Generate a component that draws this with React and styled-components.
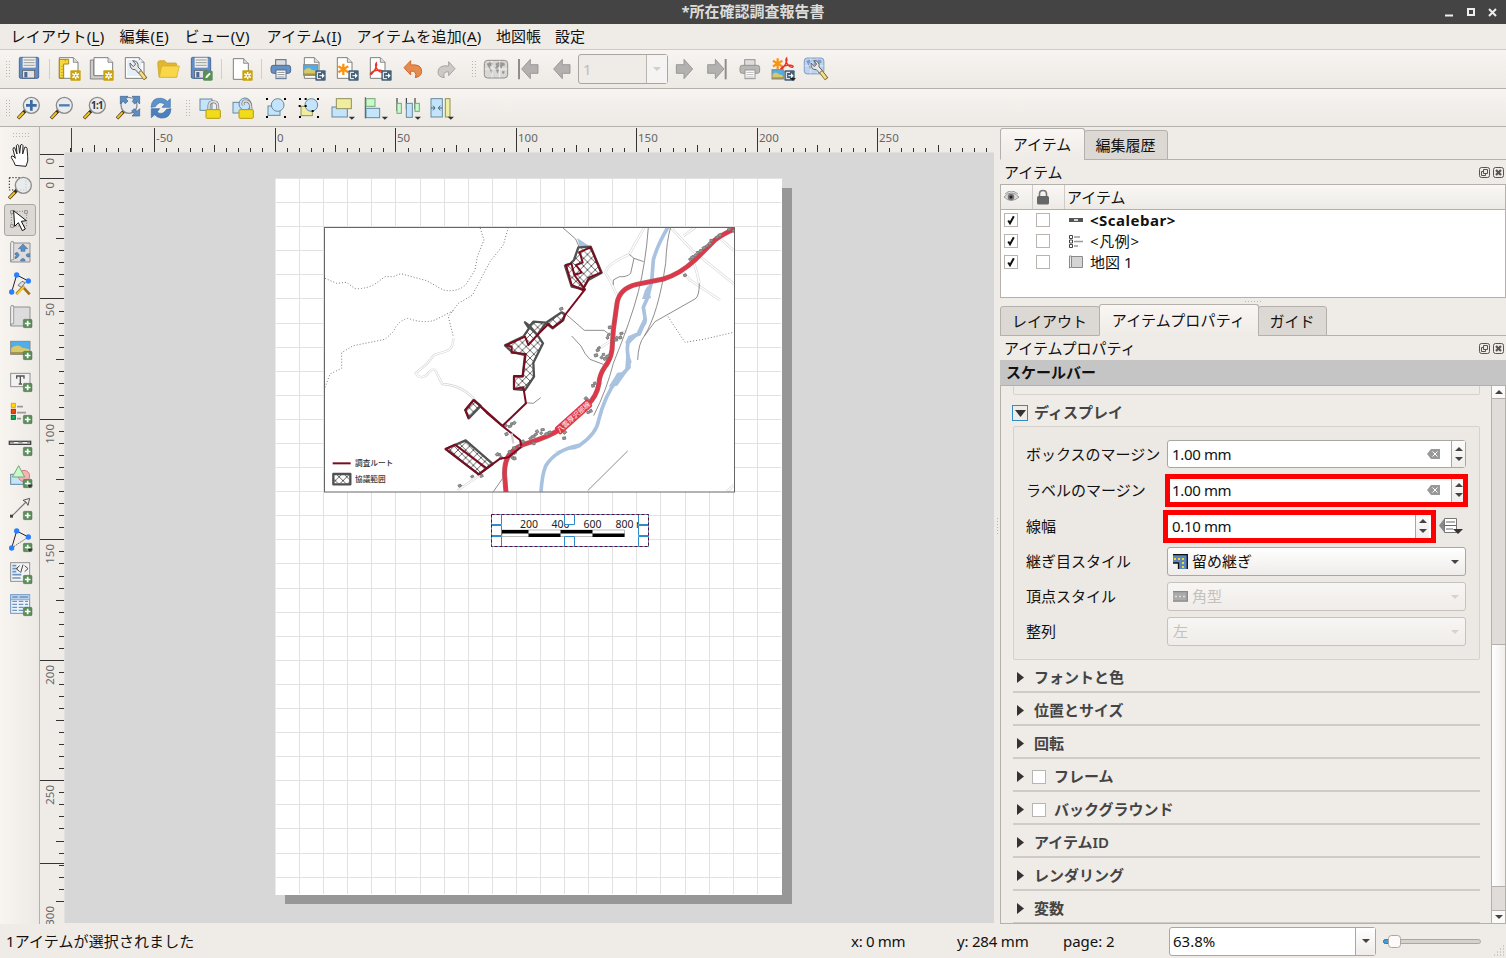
import React from 'react';
import styled, { createGlobalStyle, css } from 'styled-components';

const Global = createGlobalStyle`
  * { box-sizing: border-box; }
  body { margin: 0; overflow: hidden; background: #efebe7; }
`;

const line = '#b4b1ad';

const Window = styled.div`
  width: 1506px; height: 958px; display: flex; flex-direction: column; overflow: hidden;
  background: #efebe7; color: #111;
  font: 15px/20px "Noto Sans", "Noto Sans CJK JP", sans-serif;
  white-space: nowrap;
`;
const TitleBar = styled.header`
  height: 24px; background: #444; color: #dcdcdc; font-weight: 700; line-height: 23px;
  display: grid; grid-template-columns: 70px 1fr 70px; text-align: center;
`;
const WindowButtons = styled.div`
  display: flex; align-items: center; justify-content: flex-end; padding-right: 5px;
`;
const MenuBar = styled.nav`
  height: 26px; display: flex; padding-left: 10.5px; line-height: 25px; border-bottom: 1px solid #cfcbc7;
`;
const MenuItem = styled.div`
  width: ${p => p.$w}px; letter-spacing: ${p => p.$ls || 0}px;
  u { text-underline-offset: 3px; }
`;
const ToolBar = styled.div`
  height: ${p => p.$h}px; display: flex; align-items: center;
  background: linear-gradient(#f7f4f1, #edeae5); border-bottom: 1px solid ${line};
`;
const dots = css`
  background-image: radial-gradient(circle, #b9b5b0 0.7px, transparent 0.9px);
  background-size: 3px 3px;
`;
const Grip = styled.div`
  width: 5px; height: 18px; margin-left: ${p => p.$l}px; margin-right: ${p => p.$r}px; ${dots}
`;
const HGrip = styled.div`
  width: 18px; height: 6px; margin: 5px 0 2px 12px; ${dots}
`;
const Sep = styled.div`
  width: 1px; height: 20px; margin: 0 3px 0 3px; background: #d2cec9;
`;
const Tool = styled.div`
  width: 33px; height: 33px; display: flex; align-items: center; justify-content: center; flex: none;
  svg { width: 24px; height: 24px; overflow: visible; display: block; }
`;
const SideTool = styled.div`
  width: 32px; height: 32px; margin-left: 4px; display: flex; align-items: center; justify-content: center;
  border: 1px solid ${p => (p.$on ? '#aaa6a2' : 'transparent')}; border-radius: 3px;
  background: ${p => (p.$on ? '#dcd8d4' : 'transparent')};
  svg { width: 24px; height: 24px; overflow: visible; display: block; }
`;
const PageCombo = styled.div`
  width: 90px; height: 30px; margin: 0 -1px 0 0; display: flex; border: 1px solid #a9a6a2; border-radius: 3px;
  color: #c0bdb9; line-height: 28px; background: #efebe7;
  span { flex: 1; padding-left: 4px; border-right: 1px solid #b9b6b2; }
  i { width: 20px; background: #f6f4f2; display: flex; align-items: center; justify-content: center; }
`;
const Body = styled.div` height: 797px; display: flex; `;
const SideBar = styled.div`
  width: 40px; border-right: 1px solid ${line}; background: linear-gradient(90deg, #f8f5f1, #edeae5);
`;
const CanvasView = styled.div` width: 954px; height: 797px; svg { display: block; } `;
const Splitter = styled.div`
  width: 6px; display: flex; align-items: center; justify-content: center;
  &::after { content: ''; width: 3px; height: 18px; ${dots} }
`;
const Panel = styled.aside` width: 506px; display: flex; flex-direction: column; `;
const Tabs = styled.div`
  height: ${p => p.$h}px; display: flex; align-items: flex-end; padding-top: 1px; border-bottom: 1px solid ${line};
`;
const Tab = styled.div`
  width: ${p => p.$w}px; height: ${p => (p.$on ? 32 : 30)}px; line-height: ${p => (p.$on ? 30 : 28)}px;
  text-align: center; border: 1px solid ${line}; border-radius: 3px 3px 0 0; margin-left: ${p => p.$ml || 0}px;
  border-bottom-color: ${p => (p.$on ? '#efebe7' : line)};
  margin-bottom: -1px; padding-right: 1px; letter-spacing: ${p => p.$ls || 0}px;
  background: ${p => (p.$on ? 'linear-gradient(#f9f6f3, #efebe7)' : '#dcd8d4')};
`;
const DockTitle = styled.div`
  height: ${p => p.$h}px; display: flex; align-items: center; justify-content: space-between; padding: 0 1px 0 4px;
  svg { display: block; margin-top: 2px; }
`;
const Tree = styled.div` height: 114px; border: 1px solid ${line}; background: #fff; `;
const TreeHead = styled.div`
  height: 25px; display: flex; border-bottom: 1px solid ${line}; background: linear-gradient(#faf8f5, #edeae6);
  div { border-right: 1px solid #cfccc8; width: 32px; display: flex; align-items: center; padding-left: 3px; }
  span { padding-left: 2px; line-height: 25px; }
`;
const TreeRow = styled.div`
  height: 21px; display: flex; align-items: center; padding: 0 0 2px 3px; font-weight: ${p => (p.$b ? 700 : 400)};
  letter-spacing: ${p => p.$ls || 0}px;
  svg { margin-left: 19px; margin-right: 6px; }
`;
const Check = styled.span`
  width: 14px; height: 14px; border: 1px solid #b8b5b0; background: #fff; margin-right: ${p => p.$r || 0}px;
  display: flex; align-items: center; justify-content: center; flex: none;
  svg { margin: 0; }
`;
const SplitH = styled.div`
  height: 6px; display: flex; justify-content: center; align-items: center;
  &::after { content: ''; width: 18px; height: 3px; ${dots} }
`;
const Heading = styled.div`
  height: 25px; background: #c5c5c5; font-weight: 700; padding-left: 6px; line-height: 24px;
`;
const ScrollArea = styled.div`
  height: 539px; border: 1px solid ${line}; display: flex; overflow: hidden;
`;
const Form = styled.div` width: 490px; padding: 0 11px 0 12px; overflow: hidden; color: #111; `;
const Remnant = styled.div`
  height: 9px; border: 1px solid #d5d1cd; border-top: 0; border-radius: 0 0 2px 2px;
`;
const GroupHead = styled.div`
  height: 31px; display: flex; align-items: center; padding-top: 5px; font-weight: 600; color: #444;
  span { margin-left: 6px; padding-bottom: 2px; }
`;
const Toggle = styled.i`
  width: 16px; height: 16px; margin-left: -1px; border: 1px solid #308cc6; display: flex; align-items: center; justify-content: center;
`;
const Group = styled.div`
  height: 234px; border: 1px solid #d5d1cd; border-radius: 2px; background: #ece8e4; padding: 8px 13px 0 12px;
`;
const Row = styled.div`
  height: ${p => p.$h}px; display: flex; align-items: center;
  label { width: 141px; flex: none; padding-bottom: ${p => p.$up || 0}px; }
`;
const Spin = styled.div`
  height: 28px; width: ${p => p.$w}px; display: flex; align-items: center; background: #fff;
  border: 1px solid #aaa7a3; border-radius: 3px; padding-left: 4px; letter-spacing: -0.35px; line-height: 26px;
  ${p => p.$mark && css`outline: 5px solid #f00; outline-offset: -3px; border-radius: 0; height: 29px;`}
  ${p => p.$wide && css`width: 269px; margin-left: -2px; padding-left: 6px; padding-right: 4px;`}
  span { flex: 1; }
  svg { display: block; }
`;
const Steps = styled.i`
  width: 14px; height: 100%; margin-left: 11px; border-left: 1px solid #aaa7a3; background: linear-gradient(#fdfdfc, #efecea);
  display: flex; flex-direction: column; align-items: center; justify-content: space-evenly;
`;
const Combo = styled.div`
  height: 29px; width: 299px; display: flex; align-items: center; border: 1px solid ${p => (p.$off ? '#c6c3bf' : '#aaa7a3')};
  border-radius: 3px; background: linear-gradient(${p => (p.$off ? '#f8f6f4, #efece9' : '#fff, #efecea')});
  color: ${p => (p.$off ? '#c4c1bd' : '#111')}; padding: 0 6px 0 5px;
  span { flex: 1; padding-bottom: 2px; }
  svg { margin-right: 4px; }
  svg:last-child { margin: 0; }
`;
const Section = styled.div`
  height: 33px; display: flex; align-items: center; border-bottom: 2px solid #cfcbc7; padding: 4px 0 0 4px;
  font-weight: 600; color: #444;
  span.t { margin-left: ${p => (p.$c ? 8 : 10)}px; padding-bottom: 2px; }
`;
const CheckGap = styled.span` width: 8px; `;
const ScrollBar = styled.div`
  width: 14px; border-left: 1px solid ${line}; background: #dfdcd9; display: flex; flex-direction: column;
`;
const ScrollBtn = styled.div`
  height: 13px; background: #fbfaf9; border: solid ${line}; border-width: ${p => (p.$top ? '0 0 1px' : '1px 0 0')};
  display: flex; align-items: center; justify-content: center;
`;
const Thumb = styled.div`
  height: 243px; margin: 245px 0 auto; background: linear-gradient(90deg, #fff, #f0eeeb); border: solid ${line}; border-width: 1px 0;
`;
const Status = styled.footer`
  height: 34px; display: flex; align-items: center; padding-left: 6px;
`;
const StatusText = styled.div` width: ${p => p.$w}px; letter-spacing: ${p => p.$ls || 0}px; `;
const ZoomBox = styled.div`
  width: 207px; height: 29px; border: 1px solid #aaa7a3; border-radius: 3px; background: #fff; display: flex; line-height: 27px; letter-spacing: 0;
  span { flex: 1; padding-left: 3px; }
  i { width: 20px; border-left: 1px solid #aaa7a3; background: linear-gradient(#fff, #efecea); display: flex; align-items: center; justify-content: center; }
`;
const OverrideIcon = styled.svg` margin-left: ${p => p.$l}px; `;

const Tri = ({ d = 'down', w = 8, h = 4, c = '#444' }) => (
  <svg width={w} height={h} viewBox="0 0 8 4" preserveAspectRatio="none">
    <path d={{ down: 'M0 0H8L4 4Z', up: 'M0 4H8L4 0Z', right: 'M0 0L8 2L0 4Z' }[d]} fill={c} />
  </svg>
);
const Tick = () => (
  <svg width="8" height="10" viewBox="0 0 8 10"><path d="M1.2 5.5L3 8.3L6.8 1.2" fill="none" stroke="#111" strokeWidth="2" /></svg>
);

/* ---------- icon parts, on a 72-unit grid ---------- */
const Ic = ({ children }) => <svg viewBox="0 0 72 72">{children}</svg>;
const Plus = () => (
  <g><rect x="46" y="46" width="26" height="25" rx="3" fill="#5b8c5a" stroke="#4a7349" strokeWidth="1.5" />
    <path d="M59 50V67M50.500 58.500H67.500" stroke="#fff" strokeWidth="5" /></g>
);
const Gear = () => (
  <g><rect x="40" y="40" width="31" height="31" rx="3" fill="#c8a30a" />
    <path d="M56 45V67M46 50L66 62M66 50L46 62" stroke="#fff" strokeWidth="4.500" /><circle cx="56" cy="56" r="6" fill="#fff" /><circle cx="56" cy="56" r="3" fill="#c8a30a" /></g>
);
const Export = ({ tri }) => (
  <g><rect x="40" y="40" width="31" height="31" rx="3" fill="#45637a" />
    <path d="M57 46H46V65H57M52 56H63" stroke="#fff" strokeWidth="3" fill="none" /><path d="M60 48L68 56L60 64Z" fill="#fff" />
    {tri && <path d="M56 63H75L66 71Z" fill="#222" />}</g>
);
const Menu = () => <path d="M56 62H75L65.500 71Z" fill="#333" />;
const Sheet = ({ x = 7, w = 46, y = 2, h = 62 }) => (
  <g><path d={`M${x} ${y}H${x + w - 14}L${x + w} ${y + 14}V${y + h}H${x}Z`} fill="#fff" stroke="#666" strokeWidth="2.500" />
    <path d={`M${x + w - 14} ${y}V${y + 14}H${x + w}`} fill="#ddd" stroke="#666" strokeWidth="2" /></g>
);
const Disk = () => (
  <g><rect x="7" y="1" width="58" height="63" rx="4" fill="#628dc4" stroke="#47699b" strokeWidth="3" />
    <rect x="17" y="2" width="39" height="30" fill="#f0f0ee" /><path d="M20 9H53M20 17H53M20 25H53" stroke="#888" strokeWidth="2.500" />
    <rect x="17" y="40" width="36" height="23" fill="#e3e3e1" stroke="#555" strokeWidth="2" /><rect x="22" y="45" width="9" height="16" fill="#47699b" /></g>
);
const Wrench = () => (
  <g><path d="M48 41L68 66" stroke="#7b6a2b" strokeWidth="13" /><path d="M49 42L66 64" stroke="#f3e184" strokeWidth="8" />
    <path d="M21 18Q20 39 37 38L46 48L55 40L45 30Q48 12 29 11L38 21L31 29Z" fill="#e8e8e8" stroke="#666" strokeWidth="3" /></g>
);
const Lens = ({ children, cx = 43 }) => (
  <g><path d="M3 67L27 42" stroke="#3d3010" strokeWidth="10" /><path d="M4 66L20 49" stroke="#f5c51f" strokeWidth="6" />
    <circle cx={cx} cy="28" r="24" fill="#e9ebec" stroke="#898b8c" strokeWidth="4" />{children}</g>
);
const blue = { fill: '#c4e4fb', stroke: '#6489a0', strokeWidth: 3 };
const yel = { fill: '#f1eda0', stroke: '#90905c', strokeWidth: 3 };
const grn = { fill: '#c7fac8', stroke: '#77a67a', strokeWidth: 3 };
const Corners = () => (
  <g fill="#000">{[[6, 6], [60, 6], [6, 60], [60, 60]].map(([x, y]) => <rect key={x + '-' + y} x={x} y={y} width="6" height="6" />)}</g>
);
const Padlock = ({ open }) => (
  <g><path d={open ? 'M37 28Q32 13 48 15Q60 17 60 43' : 'M33 42V31Q33 17 46 17Q59 17 59 31V42'} fill="none" stroke="#777" strokeWidth="9" />
    <path d={open ? 'M37 28Q32 13 48 15Q60 17 60 43' : 'M33 42V31Q33 17 46 17Q59 17 59 31V42'} fill="none" stroke="#ddd" strokeWidth="5" />
    <rect x="24" y="41" width="43" height="26" rx="3" fill="#f1dc1c" stroke="#b89b09" strokeWidth="3" /></g>
);
const Page1 = ({ d, c }) => <path d={d} fill={c || '#b3b1af'} stroke="#908e8c" strokeWidth="2.500" />;
const Star = ({ x, y, s = 1 }) => (
  <path transform={`translate(${x} ${y}) scale(${s})`} d="M0-17V17M-15-9L15 9M15-9L-15 9" stroke="#f79316" strokeWidth="7" />
);
const Pdf = ({ x, y }) => (
  <path transform={`translate(${x} ${y})`} d="M0-17Q-6-10 3 2Q10 13 19 10Q22 4 5 4Q-10 6-17 14Q-20 20-13 15Q-2 4 1-11Z" fill="none" stroke="#ea3323" strokeWidth="4" />
);
const Nodes = ({ children, dash }) => (
  <g fill="none" stroke="#222" strokeWidth="3"><path d="M11 60L26 9L61 27" />{dash && <path d="M61 27L11 60" strokeDasharray="3 4" />}
    <g fill="#2a7fff" stroke="none"><circle cx="11" cy="60" r="8" /><circle cx="26" cy="9" r="8" /><circle cx="61" cy="27" r="8" /></g>{children}</g>
);
const Printer = ({ a, b, c }) => (
  <g stroke={c} strokeWidth="3"><rect x="20" y="8" width="31" height="20" fill="#ddd" /><rect x="6" y="25" width="59" height="24" rx="7" fill={a} />
    <rect x="21" y="39" width="30" height="26" fill="#fff" /><path d="M25 46H47M25 53H47M25 60H47" stroke={b} strokeWidth="2.500" /></g>
);
const Scenic = ({ x, y, w, h }) => (
  <g><rect x={x} y={y} width={w} height={h} fill="#50aeea" /><path d={`M${x} ${y + h * .55}Q${x + w * .35} ${y + h * .1} ${x + w * .6} ${y + h * .5}L${x + w} ${y + h * .6}V${y + h}H${x}Z`} fill="#d7c96a" />
    <path d={`M${x} ${y + h * .82}H${x + w}V${y + h}H${x}Z`} fill="#a89740" /><rect x={x} y={y} width={w} height={h} fill="none" stroke="#888" strokeWidth="3" /></g>
);
const WorldMap = ({ bg, c, ink }) => (
  <g><rect x="1" y="10" width="70" height="53" rx="10" fill={bg} stroke={c} strokeWidth="3" />
    <path d="M8 20L18 16L28 19L22 28L17 27L19 34L26 38L23 50L19 42L13 29ZM34 20L44 15L61 17L63 25L55 28L52 36L47 29L41 30L45 39L41 50L36 40L33 33L37 27ZM55 42L62 43L60 51L54 49Z" fill={ink} />
    <path d="M24 11V62M47 11V62M2 36H70" stroke="#fff" strokeWidth="2.500" opacity=".75" /></g>
);
const MapSettings = () => (
  <g><g transform="translate(0 -6) scale(.84 .9)"><WorldMap bg="#bdd4f1" c="#7394bd" ink="#7f9cc4" /></g><Wrench /></g>
);
const arrow = 'M3 36L29 7V23H52V49H29V65Z';

const bar1 = [
  <Ic><Disk /></Ic>, '|',
  <Ic><Sheet w={56} /><path d="M7 7H35V21H20V63H7Z" fill="#f6d73c" stroke="#a8880f" strokeWidth="3" /><path d="M13 28H19M13 37H19M13 46H19M13 55H19M25 8V14" stroke="#a8880f" strokeWidth="2" /><Gear /></Ic>,
  <Ic><path d="M1 9H12V55H56V66H1Z" fill="#ccc" stroke="#777" strokeWidth="2.500" /><Sheet x={12} w={56} h={54} /><Gear /></Ic>,
  <Ic><Sheet w={56} /><rect x="13" y="9" width="42" height="48" fill="#e6eef8" /><Wrench /></Ic>,
  <Ic><path d="M5 19Q5 11 11 11H26L32 18H59Q63 18 62 26V60H9Z" fill="#e4b630" stroke="#c49b22" strokeWidth="2" /><path d="M10 61L17 27H70L62 61Z" fill="#fad748" stroke="#d0a92b" strokeWidth="2" /></Ic>,
  <Ic><Disk /><rect x="42" y="41" width="29" height="30" rx="4" fill="#579155" /><path d="M49 64L51 57L61 47L65 51L55 62Z" fill="#fff" /></Ic>, '|',
  <Ic><Sheet x={13} w={45} y={5} h={62} /><Gear /></Ic>, '|',
  <Ic><Printer a="#668fc2" b="#777" c="#4f6b8d" /></Ic>,
  <Ic><Sheet x={7} w={44} /><Scenic x={5} y={23} w={42} h={32} /><Export /></Ic>,
  <Ic><Sheet x={7} w={44} /><Star x={25} y={37} /><Export /></Ic>,
  <Ic><Sheet x={7} w={44} /><Pdf x={25} y={35} /><Export /></Ic>,
  <Ic><path d="M9 32L29 11V24Q62 20 62 43Q62 58 43 62Q50 42 29 42V54Z" fill="#e78a4d" stroke="#cc6a2d" strokeWidth="3" /></Ic>,
  <Ic><path d="M63 35L44 14V27Q12 23 12 46Q12 60 31 62Q24 44 44 44V56Z" fill="#cccac8" stroke="#a6a4a2" strokeWidth="3" /></Ic>, 'g',
  <Ic><WorldMap bg="#dad8d6" c="#8f8d8b" ink="#9a9896" /></Ic>,
  <Ic><path d="M6 6V67" stroke="#908e8c" strokeWidth="6" /><g transform="translate(11 0)"><Page1 d={arrow} /></g></Ic>,
  <Ic><g transform="translate(8 0)"><Page1 d={arrow} /></g></Ic>, 'c',
  <Ic><g transform="translate(65 0) scale(-1 1)"><Page1 d={arrow} /></g></Ic>,
  <Ic><path d="M62 6V67" stroke="#908e8c" strokeWidth="6" /><g transform="translate(60 0) scale(-1 1)"><Page1 d={arrow} /></g></Ic>,
  <Ic><Printer a="#b9b7b5" b="#aaa" c="#969492" /></Ic>,
  <Ic><Star x={20} y={20} s={.95} /><Pdf x={47} y={20} /><Scenic x={3} y={38} w={34} h={28} /><Export tri /></Ic>,
  <Ic><MapSettings /></Ic>,
];
const bar2 = [
  <Ic><Lens><path d="M43 12V44M27 28H59" stroke="#3d6aa0" strokeWidth="8" /></Lens></Ic>,
  <Ic><Lens><path d="M27 28H59" stroke="#4d7db5" strokeWidth="7" /></Lens></Ic>,
  <Ic><Lens><text x="42" y="38" textAnchor="middle" fontSize="29" fontWeight="700" fill="#333" fontFamily="Noto Sans, sans-serif" letterSpacing="-2">1:1</text></Lens></Ic>,
  <Ic><Lens cx={39} /><g fill="#5e8cc3" stroke="#385f91" strokeWidth="2"><path d="M13 1H36L29 8L36 15L28 23L21 16L13 24Z" /><path d="M71 1V24L64 17L56 24L49 16L56 8L48 1Z" /><path d="M71 60H48L55 53L47 45L55 38L63 46L71 38Z" /></g></Ic>,
  <Ic><path d="M6 34Q8 3 38 7Q48 9 55 16L64 8V34H39L47 25Q31 12 19 32Z" fill="#5d92cb" stroke="#4474ab" strokeWidth="2" /><path d="M66 38Q64 69 35 66Q23 63 17 56L7 65V38H32L24 48Q40 60 53 40Z" fill="#4b80bf" stroke="#376aa5" strokeWidth="2" /></Ic>, 'g',
  <Ic><rect x="6" y="9" width="36" height="34" {...blue} /><Padlock /></Ic>,
  <Ic><rect x="6" y="19" width="36" height="32" {...blue} /><circle cx="42" cy="24" r="18" {...blue} /><Padlock open /></Ic>,
  <Ic><rect x="12" y="30" width="36" height="28" {...blue} /><circle cx="41" cy="27" r="19" {...blue} /><Corners /></Ic>,
  <Ic><rect x="12" y="31" width="34" height="28" {...yel} /><circle cx="43" cy="27" r="19" {...blue} /><Corners /><path d="M5 27h6v6h-6ZM23 27h6v6h-6ZM23 6h6v6h-6ZM44 42h6v6h-6Z" /></Ic>,
  <Ic><rect x="6" y="33" width="46" height="30" {...blue} /><rect x="19" y="8" width="45" height="30" {...yel} /><Menu /></Ic>,
  <Ic><path d="M7 4V67" stroke="#333" strokeWidth="3" /><rect x="9" y="8" width="27" height="23" {...grn} /><rect x="9" y="37" width="41" height="28" {...blue} /><Menu /></Ic>,
  <Ic><path d="M3 6V45M31 6V40M57 6V40" stroke="#222" strokeWidth="3" /><rect x="3" y="22" width="13" height="30" {...grn} /><rect x="31" y="22" width="18" height="42" {...blue} /><rect x="57" y="22" width="13" height="24" {...grn} /><Menu /></Ic>,
  <Ic><rect x="6" y="8" width="34" height="55" {...blue} /><rect x="49" y="8" width="14" height="55" {...yel} /><path d="M6 36H17M12 29L18 36L12 43M40 36H29M34 29L28 36L34 43" fill="none" stroke="#46637a" strokeWidth="3" /><Menu /></Ic>,
];
const Scroll = () => (
  <g><path d="M17 9H66V66H8V10Q17 0 17 9Z" fill="#dcdcdc" stroke="#909090" strokeWidth="3" /><path d="M8 10Q8 4 12 4Q17 4 17 11V59Q9 57 8 64Z" fill="#eee" stroke="#909090" strokeWidth="2.500" /></g>
);
const side = [
  <Ic><path d="M22 64Q17 51 10 41Q9 34 15 36L22 43L15 16Q15 9 20 11L27 30L25 5Q28-1 32 4L35 28L38 3Q42-2 45 5L44 30L50 10Q55 7 57 13L59 37Q62 50 54 67Z" fill="#fff" stroke="#222" strokeWidth="3" /></Ic>,
  <Ic><path d="M4 5H38M4 5V42H38" fill="none" stroke="#222" strokeWidth="3" strokeDasharray="4 5" /><Lens cx={46} /><path d="M54 14V42M36 42H56" fill="none" stroke="#c4c6c8" strokeWidth="3" strokeDasharray="4 5" /></Ic>,
  <Ic><path d="M10 10H56V54H10Z" fill="none" stroke="#777" strokeWidth="3" strokeDasharray="3 5" /><path d="M8 8h8v8H8ZM50 8h8v8h-8ZM8 50h8v8H8Z" fill="#eee" stroke="#777" strokeWidth="2.500" /><path d="M17 8L20 55L31 44L43 68L52 63L40 40L55 38Z" fill="#fff" stroke="#111" strokeWidth="3" /></Ic>,
  <Ic><Scroll /><g fill="#5b8dc4" stroke="#3c6590" strokeWidth="1.500"><path d="M45 12L59 26H51V34H39V26H31Z" /><path d="M21 40L28 37L34 45L28 53L21 56V50H25V44H21ZM65 41H58L54 45L58 51H65Z" /><path d="M38 63V59L45 55L51 59V63Z" /></g></Ic>,
  <Ic><Nodes><path d="M25 66L48 42M44 44L65 67" stroke="#a2701a" strokeWidth="8" /><path d="M27 66L48 44" stroke="#f6cf22" strokeWidth="6" /><path d="M30 40L42 28L52 32L40 46Z" fill="#ddd" stroke="#777" /></Nodes></Ic>,
  <Ic><Scroll /><Plus /></Ic>,
  <Ic><Scenic x={8} y={16} w={58} h={39} /><Plus /></Ic>,
  <Ic><rect x="8" y="16" width="58" height="40" fill="#f2f2f2" stroke="#909090" strokeWidth="3" /><path d="M26 32V24H48V32M37 24V48M32 48H42" fill="none" stroke="#555" strokeWidth="4" /><Plus /></Ic>,
  <Ic><g strokeWidth="3"><rect x="10" y="10" width="12" height="12" fill="#ffdd00" stroke="#f39c12" /><rect x="10" y="28" width="12" height="12" fill="#f34a0c" stroke="#a52a0a" /><rect x="10" y="46" width="12" height="12" fill="#13ae5c" stroke="#0b6537" /></g><path d="M27 20H45M27 38H54M27 56H39" stroke="#999" strokeWidth="5" /><Plus /></Ic>,
  <Ic><rect x="4" y="28" width="64" height="9" fill="#f6f6f6" stroke="#444" strokeWidth="4" /><path d="M6 32H18M31 32H44M57 32H66" stroke="#999" strokeWidth="5" /><Plus /></Ic>,
  <Ic><rect x="8" y="31" width="38" height="30" {...blue} /><circle cx="48" cy="36" r="17" fill="#fab3b3" stroke="#c98284" strokeWidth="3" /><path d="M32 5L50 39H13Z" {...grn} /><Plus /><Menu /></Ic>,
  <Ic><path d="M11 61L54 18" stroke="#777" strokeWidth="3.500" /><path d="M65 7L60 28L54 18L45 13Z" fill="#eee" stroke="#555" strokeWidth="3" /><rect x="6" y="56" width="9" height="9" fill="#444" /><Plus /></Ic>,
  <Ic><Nodes dash /><Plus /><Menu /></Ic>,
  <Ic><rect x="8" y="8" width="57" height="56" fill="#f4f4f4" stroke="#909090" strokeWidth="3" /><path d="M13 17H25M13 26H29M13 35H25M13 44H40M13 54H38" stroke="#6894c8" strokeWidth="5" /><path d="M35 17L25 26L35 35M50 17L60 26L50 35M45 14L38 38" fill="none" stroke="#444" strokeWidth="3" /><Plus /></Ic>,
  <Ic><rect x="8" y="8" width="57" height="56" fill="#eef3fa" stroke="#6f94c4" strokeWidth="3" /><rect x="9" y="9" width="55" height="14" fill="#b5d0ed" /><path d="M13 15H29M35 15H60" stroke="#6f94c4" strokeWidth="4" /><path d="M13 28H60M13 37H60M13 46H60M13 55H50" stroke="#6f94c4" strokeWidth="3.500" strokeDasharray="14 5" /><path d="M8 23H65" stroke="#6f94c4" strokeWidth="2" /><Plus /></Ic>,
];

/* ---------- layout canvas ---------- */
const MM = 2.4092;
const X0 = 275.5, Y0 = 178.5;
const Rulers = () => {
  const els = [];
  for (let k = -17; k <= 59; k++) {
    const x = Math.round(X0 + k * 5 * MM - (k < 0 ? 1.2 : .5)) + .5;
    if (x > 993) break;
    const maj = k % 10 === 0, mid = k % 5 === 0;
    els.push(<path key={'h' + k} d={`M${x} ${maj ? 128 : mid ? 145 : 148}V152`} />);
    if (maj) els.push(<text key={'ht' + k} x={x + 1.5} y="142" stroke="none">{k * 5}</text>);
  }
  for (let k = -1; k <= 60; k++) {
    const y = Math.round(Y0 + k * 5 * MM - .5) + .5;
    const maj = k % 10 === 0 && k < 60, mid = k % 5 === 0;
    els.push(<path key={'v' + k} d={`M${maj ? 40 : mid ? 56 : 59} ${y}H64`} />);
    if (maj) els.push(<text key={'vt' + k} transform={`translate(54 ${y + (k ? 4.5 : 3.5)}) rotate(-90)`} textAnchor="end" stroke="none">{k * 5}</text>);
  }
  els.push(<path key="prev" d="M40 154.500H64" />);
  els.push(<text key="prevt" transform="translate(54 158) rotate(-90)" textAnchor="end" stroke="none">0</text>);
  els.push(<path key="end" d="M40 863.500H64" />);
  els.push(<text key="endt" transform="translate(54 906) rotate(-90)" textAnchor="end" stroke="none">300</text>);
  return <g stroke="#333" fill="#666" fontSize="11.500" fontFamily="Noto Sans, sans-serif">{els}</g>;
};
const Grid = () => {
  const d = [];
  for (let k = 1; k <= 20; k++) d.push(`M${Math.round(X0 + k * 10 * MM - .5) + .5} 179V894`);
  for (let k = 0; k <= 29; k++) d.push(`M276 ${Math.round(Y0 + k * 10 * MM - .5) + .5}H781`);
  return <path d={d.join('')} stroke="#e2e2e2" fill="none" />;
};
const houses = [[612, 32], [598, 28], [570, 45], [562, 52], [545, 62], [540, 70], [532, 78], [522, 84], [514, 92], [505, 98], [497, 106], [487, 112], [482, 118], [466, 166], [240, 322], [237, 345], [234, 353], [272, 352], [275, 341], [258, 360], [262, 353], [208, 384], [204, 391], [198, 406], [222, 404], [216, 412], [225, 416], [233, 409], [196, 490], [190, 497], [168, 535], [172, 541], [184, 572], [176, 578], [103, 655], [104, 637], [88, 620], [60, 637], [50, 642], [38, 630], [35, 639], [22, 634], [18, 644], [10, 650], [13, 670], [2, 655], [-30, 680], [-22, 665], [-38, 690], [-47, 684], [-52, 712], [-45, 700], [-60, 695], [-45, 715], [-92, 705], [-98, 703], [-85, 712], [-172, 770], [-145, 768], [-153, 763], [-204, 800], [-210, 797], [-70, 642], [-60, 620], [-53, 612], [-46, 608], [-72, 618], [94, 267]];
const area = { fill: 'url(#hatch)', stroke: '#505252', strokeWidth: 7, strokeLinejoin: 'round' };
const highway = 'M614 28Q585 38 555 60L495 120Q450 162 400 177L320 193Q268 205 261 250L250 330L246 390Q241 420 225 440Q208 465 207 490Q200 530 172 555L90 628Q60 648 0 667Q-50 680-67 712Q-80 740-75 780L-72 818';
const MapItem = () => (
  <g>
    <defs>
      <clipPath id="mapclip"><rect x="324" y="227" width="410.500" height="265" /></clipPath>
      <pattern id="hatch" width="23" height="23" patternUnits="userSpaceOnUse"><rect width="23" height="23" fill="#fff" /><path d="M-1-1L24 24M24-1L-1 24" stroke="#333" strokeWidth="2.300" /></pattern>
    </defs>
    <rect x="324.500" y="227.500" width="410" height="264.500" fill="#fff" />
    <g clipPath="url(#mapclip)">
      <g transform="translate(530 220) scale(.33333)" fill="none">
        <path d="M343 22Q310 80 298 103Q225 135 227 160L242 185L260 225M422 22L488 92L612 192M496 22L460 48M570 55L612 92M492 132Q500 150 508 190M450 148L480 180L570 240M200 390L290 332M590 815L612 795" stroke="#d9d9d9" strokeWidth="8" />
        <path d="M343 22Q310 80 298 103Q225 135 227 160L242 185L260 225M422 22L488 92L612 192M496 22L460 48M570 55L612 92M492 132Q500 150 508 190M450 148L480 180L570 240M200 390L290 332M590 815L612 795" stroke="#fff" strokeWidth="4" />
        <path d="M415 20Q382 75 370 120L365 185L352 235L340 262L346 300L328 342Q290 350 292 390L297 442L262 478Q225 525 206 600Q200 640 150 675Q75 690 47 738Q36 765 33 815" stroke="#a9c2e0" strokeWidth="11" />
        <path d="M355 195L363 235L336 238L345 210ZM345 285L350 310L325 345L300 370L285 370L295 348L320 338ZM290 385L305 425L295 450L262 497L236 500L262 458L285 455ZM72 696L115 683L155 680L135 688Z" fill="#a9c2e0" />
        <path d="M142 54L160 66L177 78H148Z" fill="#a9c2e0" />
        <path d="M355 22Q347 130 325 215T250 430Q230 510 191 587M422 22Q410 60 407 130Q385 280 343 348Q325 370 323 420M508 190Q508 230 495 237L375 305L343 348M97 22L137 57L147 80M298 103L312 115L341 125M312 115L302 160Q290 172 268 170L250 180V195M105 280L163 331H222L240 345M125 348L153 378Q165 405 180 418L220 433M293 693L173 812M-82 775L-110 815M-16 548L10 550L32 533" stroke="#777" strokeWidth="2.500" />
        <path d="M414 290L465 367L520 358L612 337" stroke="#777" strokeWidth="3" strokeDasharray="3 6" />
        <path d={highway} stroke="#b95560" strokeWidth="15" />
        <path d={highway} stroke="#e03648" strokeWidth="9.500" />
        {houses.map(([x, y], i) => <rect key={i} x={x - 5} y={y - 4} width={7 + i % 4} height={6 + i % 3} transform={`rotate(${-40 + (i % 5) * 8} ${x} ${y})`} fill="#999" stroke="#777" strokeWidth="2.500" />)}
        <path d="M145 82L182 80L215 158L175 180L158 207L125 200L105 137L120 132L132 120Z" {...area} />
        <path d="M-15 307L-3 325L-20 350L-75 376L-55 395L-15 405L-22 470H-48V507L-15 510L12 470L10 428L39 370L22 345L-1 318ZM-3 320L10 305L48 308L22 345ZM52 313L48 308L95 277L105 283L100 300L68 325Z" {...area} />
        <path d="M145 98L182 82L213 158L178 172L158 210L125 195L108 135L124 130L133 165L155 158L138 135L158 128L150 98M133 165L165 208L105 285L97 302L68 323L55 312L22 345L-5 375L-15 350L-73 376L-55 380V398L-13 402L-22 468H-48V507L-20 502L-12 550L-83 618L-30 660L-26 677M-83 618L-130 578L-168 540" stroke="#7a0c20" strokeWidth="6" strokeLinejoin="round" />
      </g>
      <g transform="translate(320 220) scale(.33333)" fill="none">
        <path d="M400 355Q400 390 375 395L342 405L322 430L287 460Q300 480 320 465Q335 445 345 450L367 492Q425 495 465 540M412 812L480 765M580 670L575 640" stroke="#d3d3d3" strokeWidth="7" />
        <path d="M400 355Q400 390 375 395L342 405L322 430L287 460Q300 480 320 465Q335 445 345 450L367 492Q425 495 465 540M412 812L480 765" stroke="#fff" strokeWidth="3.500" />
        <path d="M15 175L50 190L80 187L105 206Q140 207 165 192L195 170H220L242 161L320 182L370 210Q410 218 437 195L465 150L472 110L492 60L480 22M565 22L550 75L510 125L465 210L458 225L415 250L385 290L400 350M400 272L345 300Q310 312 265 295Q235 300 220 335L195 358L100 377L65 398V445L30 462L14 505" stroke="#777" strokeWidth="3" strokeDasharray="3 6" />
        <path d="M461 540L482 558L446 595L436 570Z" {...area} />
        <path d="M377 687L437 661L518 732L476 763Z" {...area} />
        <path d="M377 687L405 674L500 745L476 763ZM461 540L436 570L446 595M461 540L548 618M476 763L540 716L565 712L604 680" stroke="#7a0c20" strokeWidth="6" strokeLinejoin="round" />
        <path d="M38 730H92" stroke="#7a0c20" strokeWidth="6" />
        <rect x="40" y="762" width="51" height="31" {...area} />
        <g fill="#333" stroke="none" fontFamily="Noto Sans CJK JP, sans-serif" fontWeight="500" fontSize="23"><text x="105" y="738">調査ルート</text><text x="105" y="786">協議範囲</text></g>
      </g>
      <g transform="translate(573.500 417) rotate(-42)">
        <rect x="-22" y="-4.500" width="44" height="9" rx="1.500" fill="#e03648" />
        <text textAnchor="middle" y="2.600" fontSize="7" fill="#fff" fontFamily="Noto Sans CJK JP, sans-serif">八雲厚沢部線</text>
      </g>
    </g>
    <rect x="324.500" y="227.500" width="410" height="264.500" fill="none" stroke="#666" />
  </g>
);
const ScaleBar = () => (
  <g>
    <rect x="492" y="515" width="156" height="31" fill="#fff" />
    <path d="M502 530h122.500v6.500H502Z" fill="#fff" stroke="#aaa" strokeWidth=".8" />
    <path d="M502 530h26.500v3.500H502ZM528.500 533.500h32v3.500h-32ZM560.500 530h32v3.500h-32ZM592.500 533.500h32v3.500h-32Z" />
    <g fontFamily="Noto Sans, sans-serif" fontSize="10.500" fill="#222" textAnchor="middle">
      <text x="529" y="527.500">200</text><text x="560.500" y="527.500">400</text><text x="592.500" y="527.500">600</text><text x="624.500" y="527.500">800</text><text x="641" y="527.500">m</text>
    </g>
    <g fill="#fff" stroke="#2f8bc9">
      <path d="M491.500 514.500h10v10h-10ZM491.500 525.500h10v10h-10ZM491.500 536.500h10v10h-10ZM638.500 514.500h10v10h-10ZM638.500 525.500h10v10h-10ZM638.500 536.500h10v10h-10ZM564.500 514.500h10v10h-10ZM564.500 536.500h10v10h-10Z" />
    </g>
    <rect x="491.500" y="514.500" width="157" height="32" fill="none" stroke="#4da3d8" />
    <rect x="491.500" y="514.500" width="157" height="32" fill="none" stroke="#6a0830" strokeDasharray="3 2" />
  </g>
);
const Canvas = () => (
  <svg width="954" height="797" viewBox="40 127 954 797">
    <path d="M64.500 152.500H994V923H64.500Z" fill="#d7d7d7" />
    <Rulers />
    <path d="M71.500 128V152" stroke="#e00000" />
    <rect x="285" y="188" width="507" height="716" fill="#979797" />
    <rect x="275.500" y="178.500" width="506.500" height="716.500" fill="#fff" />
    <Grid /><MapItem /><ScaleBar />
  </svg>
);

const DockButtons = () => (
  <svg width="26" height="12" viewBox="0 0 26 12" fill="none" stroke="#555">
    <rect x=".5" y=".5" width="10" height="10" rx="2" /><path d="M4.500 2.500h4v4h-4ZM4.500 4.500h-2v4h4v-2" />
    <rect x="14.500" y=".5" width="10" height="10" rx="2" /><path d="M17 3L22 8M22 3L17 8" strokeWidth="2.200" />
  </svg>
);
const Clear = () => (
  <svg width="13" height="10" viewBox="0 0 13 10"><path d="M4 0H13V10H4L0 5Z" fill="#999" /><path d="M5.500 2.500L10.500 7.500M10.500 2.500L5.500 7.500" stroke="#fff" /></svg>
);
const SpinSteps = () => <Steps><Tri d="up" /><Tri /></Steps>;

const renderTools = list => list.map((t, i) => {
  if (t === '|') return <Sep key={i} />;
  if (t === 'g') return <Grip key={i} $l={list === bar1 ? 8 : 7.5} $r={list === bar1 ? 3.5 : 3.5} />;
  if (t === 'c') return <PageCombo key={i}><span>1</span><i><Tri c="#d0cdca" /></i></PageCombo>;
  return <Tool key={i}>{t}</Tool>;
});

const items = [
  { name: '<Scalebar>', b: true, ls: .5, icon: <path d="M0 5h14v4H0ZM5 6.200v1.600h4V6.200Z" fill="#555" fillRule="evenodd" /> },
  { name: '<凡例>', ls: .6, icon: <g fill="none" stroke="#444"><path d="M.5 1.500h3v3h-3ZM.5 6h3v3h-3ZM.5 10.500h3v3h-3Z" /><path d="M5 3h6M5 7.500h9M5 12h4" stroke="#999" strokeWidth="1.300" /></g> },
  { name: '地図 1', icon: <g fill="#d4d4d4" stroke="#8a8a8a"><path d="M2.500 1.500h11v11h-11Z" /><path d="M.5 1h2v11l-2 1Z" fill="#eee" /></g> },
];
const sections = [['フォントと色'], ['位置とサイズ'], ['回転'], ['フレーム', 1], ['バックグラウンド', 1], ['アイテムID'], ['レンダリング'], ['変数']];

export default function App() {
  return (
    <Window>
      <Global />
      <TitleBar>
        <span /><span>*所在確認調査報告書</span>
        <WindowButtons>
          <svg width="56" height="12" viewBox="0 0 56 12" fill="none" stroke="#eee" strokeWidth="2"><path d="M0 9.500H8" /><rect x="23" y="3" width="6" height="6" /><path d="M44 3L51 10M51 3L44 10" /></svg>
        </WindowButtons>
      </TitleBar>
      <MenuBar>
        <MenuItem $w={109} $ls={.25}>レイアウト(<u>L</u>)</MenuItem>
        <MenuItem $w={65} $ls={.5}>編集(<u>E</u>)</MenuItem>
        <MenuItem $w={82} $ls={.4}>ビュー(<u>V</u>)</MenuItem>
        <MenuItem $w={90} $ls={.4}>アイテム(<u>I</u>)</MenuItem>
        <MenuItem $w={139.5} $ls={.3}>アイテムを追加(<u>A</u>)</MenuItem>
        <MenuItem $w={59}>地図帳</MenuItem>
        <MenuItem $w={40}>設定</MenuItem>
      </MenuBar>
      <ToolBar $h={39}><Grip $l={5} $r={2.5} />{renderTools(bar1)}</ToolBar>
      <ToolBar $h={38}><Grip $l={5} $r={2.5} />{renderTools(bar2)}</ToolBar>
      <Body>
        <SideBar>
          <HGrip />
          {side.map((s, i) => <SideTool key={i} $on={i === 2}>{s}</SideTool>)}
        </SideBar>
        <CanvasView><Canvas /></CanvasView>
        <Splitter />
        <Panel>
          <Tabs $h={33}><Tab $on $w={85}>アイテム</Tab><Tab $w={84} $ml={-1}>編集履歴</Tab></Tabs>
          <DockTitle $h={24}><span>アイテム</span><DockButtons /></DockTitle>
          <Tree>
            <TreeHead>
              <div><svg width="15" height="12" viewBox="0 0 15 12"><path d="M0 6Q7-2 15 6Q7 13 0 6ZM1 3Q7-3 14 3" fill="#ddd" stroke="#888" strokeWidth=".8" /><circle cx="7" cy="6" r="3.300" fill="#777" /><circle cx="7" cy="6" r="1.500" fill="#222" /></svg></div>
              <div><svg width="14" height="16" viewBox="0 0 14 16"><path d="M3.500 8V5Q3.500 1.500 7 1.500T10.500 5V8" fill="none" stroke="#777" strokeWidth="1.600" /><rect x="1" y="7" width="12" height="8.500" rx="1.500" fill="#666" /></svg></div>
              <span>アイテム</span>
            </TreeHead>
            {items.map(it => (
              <TreeRow key={it.name} $b={it.b} $ls={it.ls}>
                <Check $r={18}><Tick /></Check><Check />
                <svg width="15" height="14" viewBox="0 0 15 14">{it.icon}</svg>{it.name}
              </TreeRow>
            ))}
          </Tree>
          <SplitH />
          <Tabs $h={32}><Tab $w={100}>レイアウト</Tab><Tab $on $w={160} $ml={-1} $ls={.2}>アイテムプロパティ</Tab><Tab $w={69} $ml={-1}>ガイド</Tab></Tabs>
          <DockTitle $h={24}><span>アイテムプロパティ</span><DockButtons /></DockTitle>
          <Heading>スケールバー</Heading>
          <ScrollArea>
            <Form>
              <Remnant />
              <GroupHead><Toggle><Tri w={11} h={7} c="#333" /></Toggle><span>ディスプレイ</span></GroupHead>
              <Group>
                <Row $h={37}><label>ボックスのマージン</label><Spin $w={299}><span>1.00 mm</span><Clear /><SpinSteps /></Spin></Row>
                <Row $h={36}><label>ラベルのマージン</label><Spin $w={299} $mark><span>1.00 mm</span><Clear /><SpinSteps /></Spin></Row>
                <Row $h={36}><label>線幅</label><Spin $wide $mark><span>0.10 mm</span><SpinSteps /></Spin>
                  <OverrideIcon $l={5} width="24" height="18" viewBox="0 0 24 18"><path d="M0 8.500L5 2V15Z" fill="#888" /><path d="M5.500 1.500h12v14h-12Z" fill="#fff" stroke="#777" /><path d="M7 5h9M5.500 8.500h12M7 12h7" stroke="#666" strokeWidth="1.200" /><path d="M14 12h10l-5 5Z" fill="#333" /></OverrideIcon>
                </Row>
                <Row $h={35} $up={2}><label>継ぎ目スタイル</label><Combo><svg width="15" height="15" viewBox="0 0 15 15"><path d="M0 .5H14.500V15H6V9H0Z" fill="#5c86bd" /><path d="M0 .7H14.300V15M0 9H5.500V15" fill="none" stroke="#111" strokeWidth="1.300" /><path d="M1 5H10V14" fill="none" stroke="#f2dc22" strokeWidth="2" strokeDasharray="2 2" /></svg><span>留め継ぎ</span><Tri /></Combo></Row>
                <Row $h={35} $up={2}><label>頂点スタイル</label><Combo $off><svg width="15" height="11" viewBox="0 0 15 11"><path d="M0 .7h14.300v9.500H0" fill="#aaa" stroke="#888" strokeWidth="1.300" /><path d="M2 5.500h11" stroke="#ddd" strokeWidth="1.500" strokeDasharray="2 2" /></svg><span>角型</span><Tri c="#d5d2cf" /></Combo></Row>
                <Row $h={35} $up={2}><label>整列</label><Combo $off><span>左</span><Tri c="#d5d2cf" /></Combo></Row>
              </Group>
              {sections.map(([t, c]) => (
                <Section key={t} $c={c}><Tri d="right" w={7} h={11} c="#333" />{c && <CheckGap />}{c && <Check />}<span className="t">{t}</span></Section>
              ))}
            </Form>
            <ScrollBar>
              <ScrollBtn $top><Tri d="up" /></ScrollBtn>
              <Thumb />
              <ScrollBtn><Tri /></ScrollBtn>
            </ScrollBar>
          </ScrollArea>
        </Panel>
      </Body>
      <Status>
        <StatusText $w={845} $ls={.1}>1アイテムが選択されました</StatusText>
        <StatusText $w={106} $ls={-.3}>x: 0 mm</StatusText>
        <StatusText $w={106} $ls={-.2}>y: 284 mm</StatusText>
        <StatusText $w={106} $ls={-.05}>page: 2</StatusText>
        <ZoomBox><span>63.8%</span><i><Tri /></i></ZoomBox>
        <svg width="130" height="34" viewBox="0 0 130 34"><rect x="7.500" y="15.500" width="97" height="4" rx="2" fill="#d5d1cd" stroke="#aaa7a3" /><rect x="7.500" y="15.500" width="8" height="4" rx="2" fill="#3c9fe0" stroke="#2d7cb3" /><rect x="12.500" y="11.500" width="12" height="12" rx="3" fill="#fbfaf9" stroke="#aaa7a3" /><path d="M118 31h1M121 31h1M124 31h1M127 31h1M121 28h1M124 28h1M127 28h1M124 25h1M127 25h1M127 22h1" stroke="#aaa" /></svg>
      </Status>
    </Window>
  );
}
